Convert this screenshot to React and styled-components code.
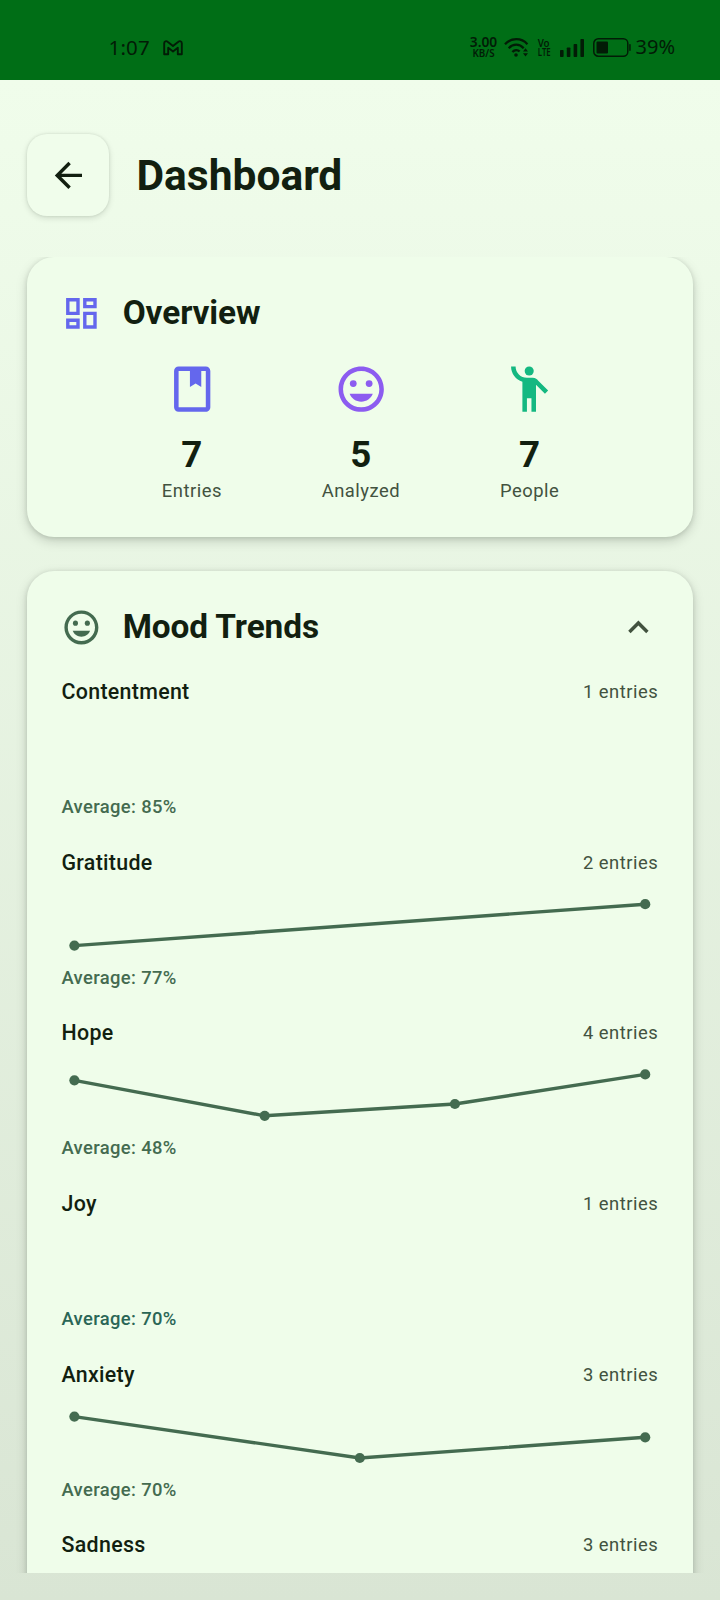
import React from 'react';
import styled, { createGlobalStyle } from 'styled-components';

const GlobalStyle = createGlobalStyle`
  * { box-sizing: border-box; }
  html, body { margin: 0; padding: 0; }
  body { font-family: Roboto, "Noto Sans", sans-serif; color: #121f10; overflow: hidden; }
  svg { display: block; }
`;

const Screen = styled.div`
  width: 720px;
  height: 1600px;
  display: flex;
  flex-direction: column;
  overflow: hidden;
  background: linear-gradient(180deg, #f0fdeb 80px, #d9e5d4 1600px);
`;

const StatusBar = styled.header`
  flex: none;
  height: 80px;
  padding: 15px 45px 0 108.5px;
  display: flex;
  align-items: center;
  justify-content: space-between;
  background: #006e16;
  color: #021c06;
  font-family: "Noto Sans", sans-serif;
`;

const StatusGroup = styled.div`
  display: flex;
  align-items: center;
  gap: ${(p) => p.$gap || 0}px;
`;

const StatusText = styled.span`
  margin-top: -1px;
  font-size: ${(p) => p.$size}px;
  line-height: 26px;
  letter-spacing: ${(p) => p.$spacing || 0}px;
`;

const Stacked = styled.div`
  width: ${(p) => p.$width}px;
  display: flex;
  flex-direction: column;
  align-items: center;
  white-space: nowrap;
  margin-right: ${(p) => p.$after}px;
`;

const StackedLine = styled.span`
  font-size: ${(p) => p.$size}px;
  line-height: ${(p) => p.$line}px;
  font-weight: 600;
  transform: scaleX(${(p) => p.$squeeze || 1});
`;

const StatusIcon = styled.svg`
  margin-right: ${(p) => p.$after || 0}px;
`;

const TopBar = styled.div`
  flex: none;
  height: 177px;
  padding: 54px 27px 0;
  display: flex;
  align-items: flex-start;
  gap: 27.5px;
`;

const BackButton = styled.button`
  width: 82px;
  height: 82px;
  padding: 0;
  border: 0;
  border-radius: 20px;
  display: flex;
  align-items: center;
  justify-content: center;
  color: #121f10;
  background: #f0fdeb;
  box-shadow: 0 2px 6px rgba(0, 20, 0, 0.13), 0 0 3px rgba(0, 20, 0, 0.1);
`;

const PageTitle = styled.h1`
  margin: 0;
  font-size: 42.5px;
  line-height: 84px;
  font-weight: 700;
`;

const Scroller = styled.main`
  height: 1316px;
  flex: none;
  padding: 0 27px;
  display: flex;
  flex-direction: column;
  gap: 34px;
  overflow: hidden;
`;

const Card = styled.section`
  flex: none;
  padding: 34px;
  border-radius: 27px;
  background: #effdea;
  box-shadow: 0 4px 12px rgba(0, 20, 0, 0.17), 0 1px 5px rgba(0, 20, 0, 0.12);
`;

const CardHeader = styled.div`
  height: 44px;
  margin-bottom: 27px;
  display: flex;
  align-items: center;
  gap: 20.9px;
`;

const CardTitle = styled.h2`
  margin: 0;
  flex: 1;
  font-size: 33.4px;
  line-height: 44px;
  font-weight: 700;
  letter-spacing: -0.1px;
`;

const Stats = styled.div`
  padding-left: 1px;
  display: flex;
  justify-content: space-evenly;
`;

const Stat = styled.div`
  display: flex;
  flex-direction: column;
  align-items: center;
`;

const StatValue = styled.div`
  margin-top: 13.6px;
  font-size: 36.7px;
  line-height: 49px;
  font-weight: 700;
`;

const StatLabel = styled.div`
  font-size: 18.4px;
  line-height: 24px;
  letter-spacing: 0.5px;
  color: #42523f;
`;

const Trends = styled.div`
  display: flex;
  flex-direction: column;
  gap: 27.2px;
`;

const Trend = styled.article`
  display: flex;
  flex-direction: column;
`;

const TrendHead = styled.div`
  display: flex;
  align-items: center;
  justify-content: space-between;
  height: 31px;
  padding: 0 0.8px 0 0.5px;
`;

const TrendName = styled.span`
  font-size: 21.4px;
  font-weight: 500;
  letter-spacing: 0.3px;
`;

const TrendCount = styled.span`
  font-size: 18.4px;
  letter-spacing: 0.5px;
  color: #42523f;
`;

const TrendChart = styled.svg`
  height: 88px;
  width: 598px;
`;

const TrendAverage = styled.div`
  padding-left: 0.5px;
  font-size: 18.4px;
  line-height: 24.45px;
  font-weight: 500;
  letter-spacing: 0.36px;
  color: ${(p) => p.$color};
`;

const Icon = ({ size = 40.8, color = 'currentColor', children }) => (
  <svg width={size} height={size} viewBox="0 0 24 24" fill={color}>{children}</svg>
);

const Smile = () => (
  <>
    <circle cx="15.5" cy="9.5" r="1.5" />
    <circle cx="8.5" cy="9.5" r="1.5" />
    <path d="M11.99 2C6.47 2 2 6.48 2 12s4.47 10 9.99 10C17.52 22 22 17.52 22 12S17.52 2 11.99 2zM12 20c-4.42 0-8-3.58-8-8s3.58-8 8-8 8 3.58 8 8-3.58 8-8 8z" />
    <path d="M12 17.5c2.33 0 4.31-1.46 5.11-3.5H6.89c.8 2.04 2.78 3.5 5.11 3.5z" />
  </>
);

const Journal = () => (
  <path fillRule="evenodd" d="M18 2H6c-1.1 0-2 .9-2 2v16c0 1.1.9 2 2 2h12c1.1 0 2-.9 2-2V4c0-1.1-.9-2-2-2zm0 18H6V4h5v7l2.5-1.5L16 11V4h2v16z" />
);

const Waving = () => (
  <>
    <circle cx="12" cy="4" r="2" />
    <path d="M15.89 8.11C15.5 7.72 14.83 7 13.53 7h-2.54C8.24 6.99 6 4.75 6 2H4c0 3.16 2.11 5.84 5 6.71V22h2v-6h2v6h2V10.05L18.95 14l1.41-1.41-4.47-4.48z" />
  </>
);

const stats = [
  { label: 'Entries', value: 7, color: '#6467ed', Glyph: Journal },
  { label: 'Analyzed', value: 5, color: '#8c5cf0', Glyph: Smile },
  { label: 'People', value: 7, color: '#14b881', Glyph: Waving },
];

const trends = [
  { name: 'Contentment', count: 1, average: 85, points: [] },
  { name: 'Gratitude', count: 2, average: 77, points: [[13.4, 67.6], [584.2, 26.2]] },
  { name: 'Hope', count: 4, average: 48, points: [[13.4, 32.3], [203.7, 67.8], [393.9, 56], [584.2, 26.4]] },
  { name: 'Joy', count: 1, average: 70, points: [], color: '#2a6656' },
  { name: 'Anxiety', count: 3, average: 70, points: [[13.4, 26.6], [298.8, 68], [584.2, 47.3]] },
  { name: 'Sadness', count: 3, points: [] },
];

const SystemStatus = () => (
  <StatusBar>
    <StatusGroup $gap={13.5}>
      <StatusText $size={20.5} $spacing={0.2}>1:07</StatusText>
      <StatusIcon width="20" height="16" viewBox="0 0 20 16" fill="none" stroke="currentColor" strokeWidth="1.9" strokeLinejoin="round">
        <path d="M1.2 14.3V3.2C1.2 1.2 3.3.6 4.6 1.7L10 6l5.4-4.3c1.3-1.1 3.4-.5 3.4 1.5v11.1h-4V7.8L10 11.5 5.2 7.8v6.5z" />
      </StatusIcon>
    </StatusGroup>
    <StatusGroup>
      <Stacked $width={28} $after={6}>
        <StackedLine $size={13.8} $line={12.5}>3.00</StackedLine>
        <StackedLine $size={9.8} $line={10}>KB/S</StackedLine>
      </Stacked>
      <StatusIcon $after={9} width="25" height="21" viewBox="0 0 25 21" fill="none" stroke="currentColor" strokeWidth="2.3">
        <path d="M1 7.2C7 .5 17.5.5 23.4 7.2M4.7 11.2c4.3-4.7 10.7-4.7 15 0M8.4 15c2.3-2.5 5.3-2.5 7.2-.4" />
        <circle cx="12" cy="18" r="1.8" fill="currentColor" stroke="none" />
        <path d="M19 14.5l2.5-3.2 2.5 3.2zM19 16.3l2.5 3.2 2.5-3.2z" fill="currentColor" stroke="none" />
      </StatusIcon>
      <Stacked $width={13} $after={9}>
        <StackedLine $size={10.8} $line={9} $squeeze={0.9}>Vo</StackedLine>
        <StackedLine $size={10} $line={11} $squeeze={0.78}>LTE</StackedLine>
      </Stacked>
      <StatusIcon $after={9} width="24" height="18" viewBox="0 0 24 18" fill="currentColor">
        <rect x="0" y="11" width="3.6" height="7" rx=".8" />
        <rect x="6.8" y="8.5" width="3.6" height="9.5" rx=".8" />
        <rect x="13.6" y="5" width="3.6" height="13" rx=".8" />
        <rect x="20.4" y="0" width="3.6" height="18" rx=".8" />
      </StatusIcon>
      <StatusIcon $after={5} width="38" height="19" viewBox="0 0 38 19">
        <rect x=".8" y=".8" width="34" height="17.4" rx="4.5" fill="none" stroke="currentColor" strokeWidth="1.5" />
        <rect x="3.5" y="3.5" width="11.5" height="12" rx="1" fill="currentColor" />
        <rect x="36.2" y="6" width="1.5" height="7" rx=".7" fill="currentColor" />
      </StatusIcon>
      <StatusText $size={20}>39%</StatusText>
    </StatusGroup>
  </StatusBar>
);

const TrendItem = ({ name, count, average, points, color = '#446b50' }) => (
  <Trend>
    <TrendHead>
      <TrendName>{name}</TrendName>
      <TrendCount>{count} entries</TrendCount>
    </TrendHead>
    <TrendChart viewBox="0 0 598 88">
      <polyline points={points.map((p) => p.join(',')).join(' ')} fill="none" stroke="#446b50" strokeWidth="3.4" />
      {points.map(([x, y]) => <circle key={x} cx={x} cy={y} r="5.1" fill="#446b50" />)}
    </TrendChart>
    {average !== undefined && <TrendAverage $color={color}>Average: {average}%</TrendAverage>}
  </Trend>
);

export default function App() {
  return (
    <>
      <GlobalStyle />
      <Screen>
        <SystemStatus />
        <TopBar>
          <BackButton aria-label="Back">
            <Icon><path d="M20 11H7.83l5.59-5.59L12 4l-8 8 8 8 1.41-1.41L7.83 13H20v-2z" /></Icon>
          </BackButton>
          <PageTitle>Dashboard</PageTitle>
        </TopBar>
        <Scroller>
          <Card>
            <CardHeader>
              <Icon color="#6467ed">
                <path d="M19 5v2h-4V5h4M9 5v6H5V5h4m10 8v6h-4v-6h4M9 17v2H5v-2h4M21 3h-8v6h8V3zM11 3H3v10h8V3zm10 8h-8v10h8V11zm-10 4H3v6h8v-6z" />
              </Icon>
              <CardTitle>Overview</CardTitle>
            </CardHeader>
            <Stats>
              {stats.map(({ label, value, color, Glyph }) => (
                <Stat key={label}>
                  <Icon size={54.4} color={color}><Glyph /></Icon>
                  <StatValue>{value}</StatValue>
                  <StatLabel>{label}</StatLabel>
                </Stat>
              ))}
            </Stats>
          </Card>
          <Card>
            <CardHeader>
              <Icon color="#446b50"><Smile /></Icon>
              <CardTitle>Mood Trends</CardTitle>
              <Icon color="#42523f"><path d="M12 8l-6 6 1.41 1.41L12 10.83l4.59 4.58L18 14z" /></Icon>
            </CardHeader>
            <Trends>
              {trends.map((t) => <TrendItem key={t.name} {...t} />)}
            </Trends>
          </Card>
        </Scroller>
      </Screen>
    </>
  );
}
